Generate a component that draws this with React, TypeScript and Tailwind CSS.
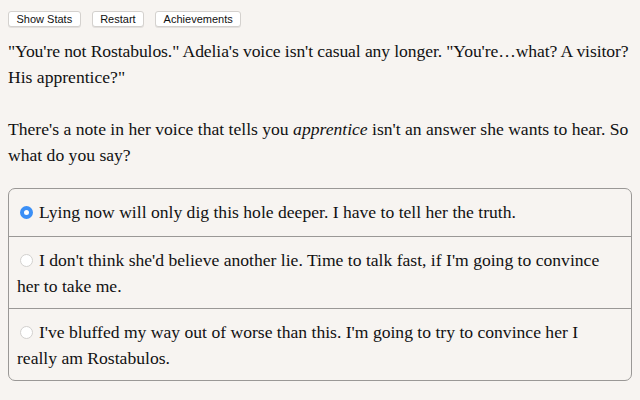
export default function App() {
  const options = [
    ["Lying now will only dig this hole deeper. I have to tell her the truth."],
    ["I don't think she'd believe another lie. Time to talk fast, if I'm going to convince", "her to take me."],
    ["I've bluffed my way out of worse than this. I'm going to try to convince her I", "really am Rostabulos."],
  ];

  return (
    <div className="min-h-[400px] w-[640px] bg-[#f7f4f1] px-2 pt-[11px] text-[#111]">
      <div className="flex gap-[11px] font-['Liberation_Sans',sans-serif] text-[11px]">
        {["Show Stats", "Restart", "Achievements"].map((b) => (
          <button
            key={b}
            type="button"
            className="h-[16px] rounded-[3px] border border-[#d4d1ce] bg-white px-[7.5px] leading-[14px] shadow-[0_1px_0_rgba(0,0,0,0.08)]"
          >
            {b}
          </button>
        ))}
      </div>

      <div className="mt-[11px] font-['Liberation_Serif',serif] text-[17.6px] leading-[26px]">
        <p>
          <span className="whitespace-nowrap tracking-[-0.1px]">
            "You're not Rostabulos." Adelia's voice isn't casual any longer. "You're…what? A visitor?
          </span>
          <br />
          His apprentice?"
        </p>
        <p className="mt-[26px]">
          There's a note in her voice that tells you <i>apprentice</i> isn't an answer she wants to
          hear. So
          <br />
          what do you say?
        </p>

        <div className="mt-[20px] flex w-[624px] flex-col overflow-hidden rounded-[7px] border border-[#9a9896]">
          {options.map((lines, i) => (
            <label
              key={i}
              className={`block cursor-pointer px-[8px] ${
                i === 0 ? "pt-[10px] pb-[11px]" : "border-t border-[#9a9896] pt-[10px] pb-[9px]"
              }`}
            >
              {i === 0 ? (
                <span className="mx-[3px] mr-[6px] inline-block h-[13px] w-[13px] rounded-full border-[4px] border-[#3b8ff6] bg-white align-[-1px]" />
              ) : (
                <span className="mx-[3px] mr-[6px] inline-block h-[13px] w-[13px] rounded-full border border-[#d2d0ce] bg-white align-[-1px]" />
              )}
              {lines[0]}
              {lines[1] && (
                <>
                  <br />
                  {lines[1]}
                </>
              )}
            </label>
          ))}
        </div>
      </div>
    </div>
  );
}
